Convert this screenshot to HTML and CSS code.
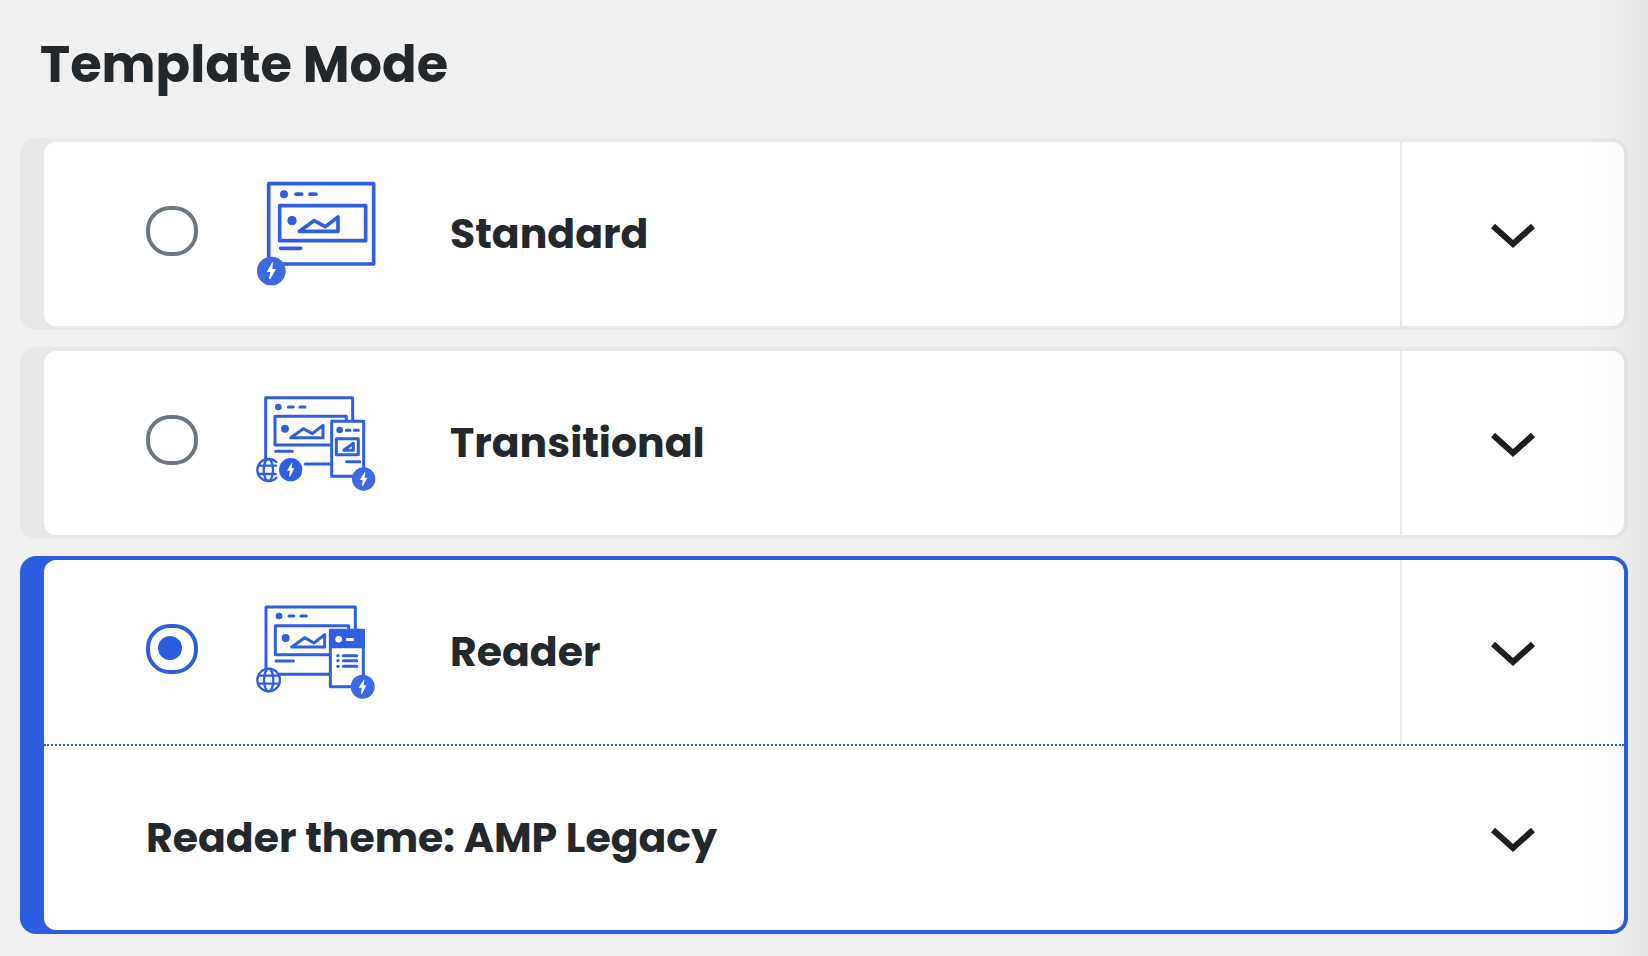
FILE: index.html
```html
<!DOCTYPE html>
<html lang="en">
<head>
    <meta charset="UTF-8">
    <meta name="viewport" content="width=device-width, initial-scale=1.0">
    <title>Template Mode</title>
    <link rel="stylesheet" href="styles.css">
</head>
<body>
    <main class="settings">
        <h1 class="heading">Template Mode</h1>
        <form class="modes">
            <section class="mode">
                <div class="mode-panel">
                    <div class="mode-header">
                        <div class="mode-choice">
                            <input type="radio" class="radio" id="mode-standard" name="template-mode">
                            <svg class="mode-icon" viewBox="48 24 384 336" aria-hidden="true">
                                <g class="line thick">
                                    <rect x="86" y="41" width="315" height="241"/>
                                    <rect x="119" y="107" width="258" height="105"/>
                                    <path d="M168 72.500H185M210 72.500H228M122 235H182"/>
                                    <path d="M178 184L222 152L256 170L294 141V184Z"/>
                                </g>
                                <circle class="solid" cx="132" cy="73" r="12"/>
                                <circle class="solid" cx="156" cy="152" r="14"/>
                                <circle class="badge" cx="94" cy="303" r="43"/>
                                <path class="bolt" d="M97 277L80 306H91L87 327H91L108 297H97L99 277Z"/>
                            </svg>
                            <label class="mode-title" for="mode-standard">Standard</label>
                        </div>
                        <button type="button" class="toggle" aria-label="Show Standard details">
                            <svg class="chevron" viewBox="0 0 48 32" aria-hidden="true"><path d="M4 7L24 25L44 7"/></svg>
                        </button>
                    </div>
                </div>
            </section>

            <section class="mode">
                <div class="mode-panel">
                    <div class="mode-header">
                        <div class="mode-choice">
                            <input type="radio" class="radio" id="mode-transitional" name="template-mode">
                            <svg class="mode-icon" viewBox="48 18 384 336" aria-hidden="true">
                                <g class="line">
                                    <path d="M77 232V50H338V118M196 249H272"/>
                                    <path d="M272 192H105V106H319V118"/>
                                    <path d="M145 78H160M180 78H195M107 211H157"/>
                                    <path d="M152 170L190 143L217 158L249 133V170Z"/>
                                    <path d="M340 286H275V121H371V262"/>
                                    <rect x="289" y="173" width="66" height="48"/>
                                    <path d="M319 148H330M343 148H355M320 242H359M311 208L340 187V208Z"/>
                                </g>
                                <circle class="solid" cx="115" cy="78" r="10"/>
                                <circle class="solid" cx="135" cy="143" r="12"/>
                                <circle class="solid" cx="299" cy="147" r="10"/>
                                <g class="line thin">
                                    <path d="M109 243C103 237 95 234 85 234A33 33 0 0 0 85 300C95 300 103 297 109 290"/>
                                    <ellipse cx="85" cy="267" rx="14" ry="33"/>
                                    <path d="M57 254H108M55 279H107"/>
                                </g>
                                <circle class="solid" cx="152" cy="266" r="35"/>
                                <path class="bolt" d="M155 246L141 269H150L147 287H150L163 262H155L157 246Z"/>
                                <circle class="badge" cx="371" cy="294" r="35"/>
                                <path class="bolt" d="M374 274L359 297H368L366 314H369L382 290H374L376 274Z"/>
                            </svg>
                            <label class="mode-title" for="mode-transitional">Transitional</label>
                        </div>
                        <button type="button" class="toggle" aria-label="Show Transitional details">
                            <svg class="chevron" viewBox="0 0 48 32" aria-hidden="true"><path d="M4 7L24 25L44 7"/></svg>
                        </button>
                    </div>
                </div>
            </section>

            <section class="mode selected">
                <div class="mode-panel">
                    <div class="mode-header">
                        <div class="mode-choice">
                            <input type="radio" class="radio" id="mode-reader" name="template-mode" checked>
                            <svg class="mode-icon" viewBox="48 18 384 336" aria-hidden="true">
                                <g class="line">
                                    <path d="M78 236V51H346V118M118 253H268"/>
                                    <path d="M268 194H106V107H326V118"/>
                                    <path d="M147 78H162M183 78H199M108 213H160"/>
                                    <path d="M155 171L194 143L222 159L254 134V171Z"/>
                                    <path d="M336 290H271V121H370V256"/>
                                    <path d="M310 197H350M310 212H350M310 229H350"/>
                                </g>
                                <rect class="solid" x="267" y="117" width="108" height="58" rx="3"/>
                                <circle class="solid" cx="117" cy="78" r="10"/>
                                <circle class="solid" cx="137" cy="144" r="12"/>
                                <circle class="solid" cx="294" cy="197" r="5"/>
                                <circle class="solid" cx="294" cy="212" r="5"/>
                                <circle class="solid" cx="294" cy="229" r="5"/>
                                <circle class="bolt" cx="296" cy="148" r="10"/>
                                <rect class="bolt" x="318" y="144" width="24" height="9" rx="4"/>
                                <g class="line thin">
                                    <circle cx="86" cy="270" r="34"/>
                                    <ellipse cx="86" cy="270" rx="14" ry="34"/>
                                    <path d="M58 257H114M57 281H115"/>
                                </g>
                                <circle class="badge" cx="368" cy="290" r="36"/>
                                <path class="bolt" d="M371 270L356 293H365L363 312H366L379 286H371L373 270Z"/>
                            </svg>
                            <label class="mode-title" for="mode-reader">Reader</label>
                        </div>
                        <button type="button" class="toggle" aria-label="Show Reader details">
                            <svg class="chevron" viewBox="0 0 48 32" aria-hidden="true"><path d="M4 7L24 25L44 7"/></svg>
                        </button>
                    </div>
                    <button type="button" class="theme-row">
                        <span class="mode-title">Reader theme: AMP Legacy</span>
                        <span class="theme-toggle">
                            <svg class="chevron" viewBox="0 0 48 32" aria-hidden="true"><path d="M4 7L24 25L44 7"/></svg>
                        </span>
                    </button>
                </div>
            </section>
        </form>
    </main>
</body>
</html>
```
FILE: styles.css
```css
* {
    margin: 0;
    padding: 0;
    box-sizing: border-box;
}

body {
    font-family: Poppins, Inter, "Liberation Sans", sans-serif;
    color: #23282d;
    background: #f0f0f0;
    min-height: 100vh;
}

/* soft shade along the right edge of the window */
body::after {
    content: "";
    position: fixed;
    top: 0;
    right: 0;
    bottom: 0;
    width: 64px;
    background: linear-gradient(to right, rgba(0, 0, 0, 0), rgba(0, 0, 0, 0.01) 50%, rgba(0, 0, 0, 0.04));
    pointer-events: none;
}

.settings {
    padding: 32px 20px 20px;
}

.heading {
    padding-left: 20px;
    margin-bottom: 42px;
    font-size: 51px;
    line-height: 64px;
    font-weight: 700;
}

.modes {
    display: flex;
    flex-direction: column;
    gap: 17px;
}

.mode {
    padding: 4px 4px 4px 24px;
    border-radius: 16px;
    background: #e8e8e8;
}

.mode.selected {
    background: #2b5dde;
}

.mode-panel {
    border-radius: 12px;
    background: #fff;
    overflow: hidden;
}

.mode-header {
    display: flex;
    min-height: 184px;
}

.mode-choice {
    flex: 1;
    display: flex;
    align-items: center;
    padding-left: 102px;
}

.radio {
    appearance: none;
    flex: none;
    width: 52px;
    height: 50px;
    margin-bottom: 6px;
    padding: 8px;
    border: 4px solid #6c7781;
    border-radius: 24px;
    background: #fff;
}

.radio:checked {
    border-color: #2b5dde;
}

.radio:checked::before {
    content: "";
    display: block;
    width: 24px;
    height: 24px;
    border-radius: 50%;
    background: #2b5dde;
}

.mode-icon {
    flex: none;
    width: 128px;
    height: 112px;
    margin: 0 66px 0 58px;
}

.mode-title {
    font-size: 41px;
    line-height: 56px;
    font-weight: 700;
}

.toggle {
    display: flex;
    align-items: center;
    justify-content: center;
    width: 224px;
    border: none;
    border-left: 2px solid #e8e8e8;
    background: none;
    cursor: pointer;
}

.theme-row {
    display: flex;
    align-items: center;
    justify-content: space-between;
    width: 100%;
    min-height: 186px;
    padding-left: 102px;
    border: none;
    border-top: 2px dotted #2b5dde;
    background: none;
    color: inherit;
    font-family: inherit;
    text-align: left;
    cursor: pointer;
}

.theme-toggle {
    display: flex;
    justify-content: center;
    width: 222px;
}

.chevron {
    width: 48px;
    height: 32px;
    margin-top: 2px;
    fill: none;
    stroke: #1e1e1e;
    stroke-width: 6;
}

/* icon parts */
.line {
    fill: none;
    stroke: #2f5fe0;
    stroke-width: 9;
    stroke-linecap: round;
    stroke-linejoin: round;
}

.thick {
    stroke-width: 11;
}

.thin {
    stroke-width: 7;
}

.solid {
    fill: #2f5fe0;
}

.badge {
    fill: #3d69e1;
}

.bolt {
    fill: #fff;
}
```
